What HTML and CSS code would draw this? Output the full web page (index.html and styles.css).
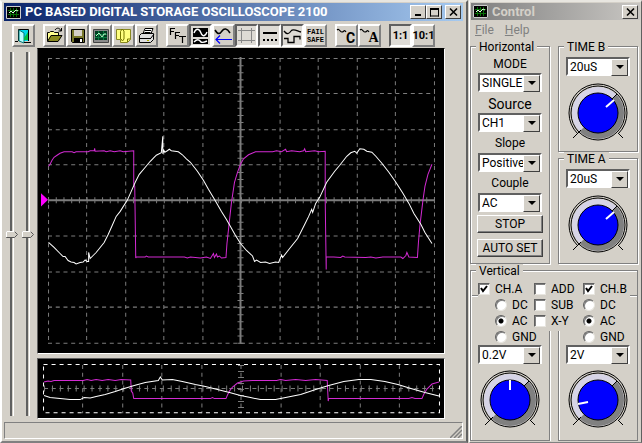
FILE: index.html
```html
<!DOCTYPE html>
<html lang="en">
<head>
<meta charset="utf-8">
<title>PC Based Digital Storage Oscilloscope 2100</title>
<link rel="stylesheet" href="styles.css">
</head>
<body>
<svg class="defs" aria-hidden="true">
  <symbol id="app" viewBox="0 0 15 13">
    <path fill="#000" d="M0 0h15v13H0z"/><path fill="none" stroke="#ccc" d="M.5.500h14v12H.5z"/>
    <path stroke="#087008" d="M2 4.500h11M2 8.500h11M4.500 2v9M7.500 2v9M10.500 2v9"/>
    <path fill="none" stroke="#dfd" d="M3 7l2-2 2 2 3-3 2 1"/>
  </symbol>
  <symbol id="knob" viewBox="-32 -30 64 60">
    <circle r="26" fill="#d6d4e6"/>
    <path fill="#808080" d="M18.400-18.400A26 26 0 0 1-18.400 18.400z"/>
    <circle r="27" fill="none" stroke="#000"/>
    <path fill="none" stroke="#000" d="M-20.500 20.500A29 29 0 1 1 20.500 20.500M-25 25l8-8M25 25l-5-5M14 -14l5-5"/>
    <circle r="20" fill="#00f" stroke="#000"/>
  </symbol>
</svg>
<main class="desktop">
<section class="window scope-window">
  <header class="titlebar">
    <svg class="app-icon"><use href="#app"/></svg>
    <h1>PC BASED DIGITAL STORAGE OSCILLOSCOPE 2100</h1>
    <button class="caption" aria-label="Minimize"><svg viewBox="0 0 11 10"><path d="M2 8h6" stroke="#000" stroke-width="2"/></svg></button>
    <button class="caption" aria-label="Maximize"><svg viewBox="0 0 11 10"><path d="M1 1.500h9M1.500 1v8.500M9.500 1v8.500M1 9h9" stroke="#000" /><path d="M1 1h9v2H1z"/></svg></button>
    <button class="caption close" aria-label="Close"><svg viewBox="0 0 11 10"><path d="M2 1.500l7 7M9 1.500l-7 7" stroke="#000" stroke-width="1.600"/></svg></button>
  </header>
  <nav class="toolbar" aria-label="Tools">
    <div class="group">
      <button aria-label="Exit"><svg viewBox="0 0 19 19"><path d="M4.500 15V3.500h10V15" fill="#00d8e8" stroke="#000"/><path d="M5 4l5 3v10l-5-2z" fill="#b8ffff" stroke="#007878"/><path d="M10 12l4-6v8h-4z" fill="#00c040"/><path d="M1 15.500h3M10 16.500h7" stroke="#000"/></svg></button>
    </div>
    <div class="group">
      <button aria-label="Open"><svg viewBox="0 0 19 19"><path d="M2.500 15V6.500h2l1-1h3l1 1h4V9" fill="#ffff90" stroke="#000"/><path d="M2.500 15.500L6 9.500h11l-4 6z" fill="#8a8a20" stroke="#000"/><path d="M10 4c2-3 5-2 6 1M13.500 5h3V2" fill="none" stroke="#000"/></svg></button>
      <button aria-label="Save"><svg viewBox="0 0 19 19"><path d="M3.500 3.500h13v13h-12l-1-1z" fill="#77772a" stroke="#000"/><path d="M6 4h8v6H6z" fill="#d4d0c8"/><path d="M6 12h9v4H6z"/><path d="M12 13h2v3h-2z" fill="#fff"/></svg></button>
      <button aria-label="Screen"><svg viewBox="0 0 19 19"><path d="M2.500 3.500h15v13h-15z" fill="#8a8a8a" stroke="#444"/><path d="M4 5h12v9H4z" fill="#003c20"/><path d="M4 8.500h12M4 11.500h12M7.500 5v9M12.500 5v9" stroke="#087840"/><path d="M5 10l3-3 3 4 2-3h2" stroke="#b8ffc8" fill="none"/></svg></button>
      <button aria-label="Notes"><svg viewBox="0 0 19 19"><path d="M2.500 3.500h14v10l-3 3h-7v-3h-4z" fill="#ffff80" stroke="#888820"/><path d="M6.500 13V5.500L8 3l2 2v8l-1.500 2L7 13M13.500 16v-3h3" stroke="#777700" fill="none"/></svg></button>
      <button aria-label="Print"><svg viewBox="0 0 19 19"><path d="M5.500 9L8 2.500h8L13.500 9z" fill="#fff" stroke="#000"/><path d="M2.500 9.500l2-2h12v6l-3 3h-11z" fill="#ddd" stroke="#000"/><path d="M3 12.500h11M14 12l3-4M8 4.500h6M7.500 6.500h6" stroke="#000"/><path d="M10 14.500h2" stroke="#aa0"/></svg></button>
    </div>
    <div class="group">
      <button aria-label="FFT"><svg viewBox="0 0 19 19"><path d="M2.500 9V2.500H7M2.500 5.500H6M7.500 13V6.500H12M7.500 9.500H11M11 10.500h7M14.500 10v7" fill="none" stroke="#000" stroke-width="1.200"/></svg></button>
      <button class="on" aria-label="Dual view"><svg viewBox="0 0 19 19"><path d="M2 2h15v9H2zM2 13h15v5H2z"/><path d="M3 7c2-5 5-5 7 0s5 2 6-1M3 16c3-3 5-3 7 0 2 1 4 0 6-1" fill="none" stroke="#fff" stroke-width="1.400"/></svg></button>
      <button aria-label="Recall wave"><svg viewBox="0 0 19 19"><path d="M1 4c3 5 5 4 7 1s5-3 8 2" fill="none" stroke="#000" stroke-width="1.500"/><path d="M2 13.500h16M6 9.500l-4 4 4 4" fill="none" stroke="#00f" stroke-width="1.200"/></svg></button>
      <button class="on" aria-label="Grid"><svg viewBox="0 0 19 19"><path d="M1 4.500h17M1 14.500h17M4.500 2v15M14.500 2v15" stroke="#888"/></svg></button>
      <button class="on" aria-label="Line style"><svg viewBox="0 0 19 19"><path d="M3 7h14" stroke="#000" stroke-width="2"/><path d="M3 14h14" stroke="#000" stroke-width="2" stroke-dasharray="2 2"/></svg></button>
      <button class="on" aria-label="Channels"><svg viewBox="0 0 19 19"><path d="M1 5c3 4 5 3 7 0s6 0 10 1M1 12.500h4v4h6v-6h6v3" fill="none" stroke="#000" stroke-width="1.300"/></svg></button>
      <button class="failsafe">FAIL<br>SAFE</button>
    </div>
    <div class="group">
      <button class="wave"><svg viewBox="0 0 11 6"><path d="M1 2c2-2 3 2 5 2s2-3 4 0" fill="none" stroke="#000" stroke-width="1.200"/></svg><b>C</b></button>
      <button class="wave serif"><svg viewBox="0 0 11 6"><path d="M1 2c2-2 3 2 5 2s2-3 4 0" fill="none" stroke="#000" stroke-width="1.200"/></svg><b>A</b></button>
    </div>
    <div class="group">
      <button class="on ratio">1:1</button>
      <button class="ratio">10:1</button>
    </div>
  </nav>
  <div class="work">
    <div class="sliders">
      <input type="range" aria-label="Channel A position" value="50">
      <input type="range" aria-label="Channel B position" value="50">
    </div>
    <div class="screens">
      <svg class="screen" viewBox="38 49 405 303" role="img" aria-label="Waveform display">
        <path class="grid" d="M48.500 58v285M86.500 58v285M125.500 58v285M163.500 58v285M202.500 58v285M279.500 58v285M317.500 58v285M356.500 58v285M394.500 58v285M433.500 58v285"/>
        <path class="grid" d="M48 58.500h386M48 93.500h386M48 129.500h386M48 164.500h386M48 235.500h386M48 271.500h386M48 306.500h386M48 342.500h386"/>
        <path class="axis" d="M48 200h386M240 57v286"/>
        <path class="ticks" stroke-dasharray="1 6.700" d="M48 200h386"/>
        <path class="ticks" stroke-dasharray="1 6.100" d="M240 58v285"/>
        <path fill="#f0f" d="M41 193l7 6.500-7 6.500z"/>
        <polyline class="b" points="48.500,166 50,164 52,160 54,157 57,155 60,153 64,151.500 72,151.500 74,152.500 76,151.500 88,151.500 90,150.500 94,150.500 94.500,148 95,151 104,150.500 106,151.500 110,150.500 114,151.500 120,150.500 123,151.500 133.500,150.500 133.500,184 134.500,186 135.500,257.500 136,256.500 145,256.500 146,255.500 148,256.500 184,256.500 187,257.500 190,256.500 200,257.500 206,256.500 210,258 213,253 214,257 216,253.500 217,256.500 219,255.500 221,257.500 225.500,257 226.500,243 229,220 231,202 234,182 237,172 240,164 243,158.500 248,154.500 255,151.500 272,151.500 276,150.500 281,151.500 285,149 286,151.500 291,150.500 299,151.500 303,150.500 304,148.500 305,151.500 314,150.500 318,151.500 324.500,151 324.500,200 325.500,269 325.500,256.500 333,256.500 340,257 342,255.500 344,256.500 365,257 370,256.500 375,257.500 382,256.500 400,256.500 402,258 405,255 406,252 408,256.500 416.500,257 417.500,242 419,225 422,200 424,186 427,174 431,164"/>
        <polyline class="a" points="48.500,242 54,247 60,253 63,256 65,256 68,260 71,261.500 74,262 76,263.500 80,262 83,261.500 85,259.500 87,261 88.500,261 88.500,252 90,258 93,255 96,252 104,242 108,234 112,225 116,216 120,211 127,200 131,191 135,182 139,174 145,167 150,161 156,155 161,152.500 162.500,136 162.500,153.500 163.500,150 164.500,152 167,150.500 169,149 171,150.500 178,151.500 182,154.500 186,158.500 190,162 197,171 203,180 208,189 214,199 221,211 226,219 230,226 235,235 240,243 246,250 252,255.500 254,261 256,259.500 260,262 265,261.500 269,263 275,261.500 278,262 281,254.500 282,257 289,248 297,238 304,224 308,216 311,209 312,212 315,203 319,197 326,182 334,171 339,165 346,156 350,152.500 354,151 356,153 359,148.500 363,149 366,151 371,152 375,156 381,163 388,172 395,182 402,193 408,203 413,213 420,224 424,232 431,243"/>
      </svg>
      <svg class="screen mini" viewBox="38 359 405 59" role="img" aria-label="Waveform overview">
        <path class="grid" d="M82.500 365v48M122.500 365v48M161.500 365v48M201.500 365v48M280.500 365v48M319.500 365v48M359.500 365v48M398.500 365v48M44 388.500h395M240.500 365v48"/>
        <path class="ticks" stroke-dasharray="1 6.900" d="M44 388.500h395"/>
        <path class="ticks" stroke-dasharray="1 5" d="M240.500 365v48"/>
        <path class="frame" d="M43.500 364.500h395v48h-395z"/>
        <polyline class="b" points="44,382 48,381 51,381.500 54,380.500 83,380.500 87,379.500 91,380.500 96,379.500 102,380.500 108,379.500 115,380.500 121,379.500 130.500,380 131,391 132.500,393 133.500,398.500 210,398.500 212,397.500 214,398.500 225.500,398.500 227,395 229,391 232,387 237,383 243,381 252,380.500 276,380.500 280,379.500 285,380.500 295,379.500 305,380.500 315,379.500 326.500,380.500 327.500,401 328,398.500 408,398.500 411,397.500 414,398.500 421,398.500 423,394 426,389 431,384 438,382"/>
        <polyline class="a" points="44,395.500 50,397.500 60,398.500 70,399.500 80,399.500 84,397.500 90,398 96,396.500 105,394.500 115,391.500 124,388.500 134,385.500 145,382.500 158,380.500 160,377 162,380 172,379.500 182,381.500 195,384.500 205,386.500 217,389.500 229,392.500 240,395.500 250,397.500 260,399.500 275,399.500 285,397.500 300,394.500 315,389.500 328,385.500 343,381.500 358,379.500 370,379.500 384,381.500 397,384.500 410,388.500 424,392.500 438,396"/>
      </svg>
    </div>
  </div>
  <footer class="status"><svg viewBox="0 0 12 12"><path d="M0 12L12 0M4 12l8-8M8 12l4-4" stroke="#808080" stroke-width="1.500"/></svg></footer>
</section>

<section class="window control-window">
  <header class="titlebar inactive">
    <svg class="app-icon"><use href="#app"/></svg>
    <h2>Control</h2>
    <button class="caption" aria-label="Close control"><svg viewBox="0 0 11 10"><path d="M2 1.500l7 7M9 1.500l-7 7" stroke="#000" stroke-width="1.600"/></svg></button>
  </header>
  <nav class="menu"><a href="#"><u>F</u>ile</a><a href="#"><u>H</u>elp</a></nav>
  <div class="panels">
    <section class="panel horizontal">
      <h3>Horizontal</h3>
      <label for="mode">MODE</label>
      <span class="select"><select id="mode"><option>SINGLE</option></select></span>
      <label for="source" class="large">Source</label>
      <span class="select"><select id="source"><option>CH1</option></select></span>
      <label for="slope">Slope</label>
      <span class="select"><select id="slope"><option>Positive</option></select></span>
      <label for="couple">Couple</label>
      <span class="select"><select id="couple"><option>AC</option></select></span>
      <button class="push">STOP</button>
      <button class="push">AUTO SET</button>
    </section>
    <div class="times">
      <section class="panel time">
        <h3><label for="tb">TIME B</label></h3>
        <span class="select"><select id="tb"><option>20uS</option></select></span>
        <svg class="knob" viewBox="-32 -30 64 60"><use href="#knob" x="-32" y="-30" width="64" height="60"/><path class="hand" d="M8-6l8-7"/></svg>
      </section>
      <section class="panel time">
        <h3><label for="ta">TIME A</label></h3>
        <span class="select"><select id="ta"><option>20uS</option></select></span>
        <svg class="knob" viewBox="-32 -30 64 60"><use href="#knob" x="-32" y="-30" width="64" height="60"/><path class="hand" d="M8-6l8-7"/></svg>
      </section>
    </div>
  </div>
  <section class="panel vertical">
    <h3>Vertical</h3>
    <div class="checks">
      <div class="col">
        <label><input type="checkbox" checked>CH.A</label>
        <label class="in"><input type="radio" name="a">DC</label>
        <label class="in"><input type="radio" name="a" checked>AC</label>
        <label class="in"><input type="radio" name="a">GND</label>
      </div>
      <div class="col">
        <label><input type="checkbox">ADD</label>
        <label><input type="checkbox">SUB</label>
        <label><input type="checkbox">X-Y</label>
      </div>
      <div class="col">
        <label><input type="checkbox" checked>CH.B</label>
        <label><input type="radio" name="b">DC</label>
        <label><input type="radio" name="b" checked>AC</label>
        <label><input type="radio" name="b">GND</label>
      </div>
    </div>
    <div class="channels">
      <div class="channel">
        <span class="select"><select aria-label="Channel A volts"><option>0.2V</option></select></span>
        <svg class="knob" viewBox="-32 -30 64 60"><use href="#knob" x="-32" y="-30" width="64" height="60"/><path class="hand" d="M0-20v10"/></svg>
      </div>
      <div class="channel">
        <span class="select"><select aria-label="Channel B volts"><option>2V</option></select></span>
        <svg class="knob" viewBox="-32 -30 64 60"><use href="#knob" x="-32" y="-30" width="64" height="60"/><path class="hand" d="M-20 4l10-2"/></svg>
      </div>
    </div>
  </section>
</section>
</main>
</body>
</html>
```
FILE: styles.css
```css
* { box-sizing: border-box; }
:root {
  --face: #d4d0c8;
  --shade: #808080;
  --dark: #404040;
}
body {
  margin: 0;
  background: var(--face);
  font: 12px/14px Roboto, "Liberation Sans", Arial, sans-serif;
  color: #000;
}
button, select, input { font: inherit; color: inherit; margin: 0; border-radius: 0; }
h1, h2, h3 { margin: 0; font-size: inherit; }
svg { display: block; }
.defs { position: absolute; width: 0; height: 0; }

.desktop { display: flex; gap: 1px; min-height: 100vh; }
.window {
  display: flex;
  flex-direction: column;
  background: var(--face);
  border: 2px solid;
  border-color: #e8e6e0 #606060 #808080 #fff;
}
.scope-window { flex: 1; min-width: 0; padding: 1px 3px 0 2px; }
.control-window { width: 173px; flex: none; padding: 1px 1px 0 0; border-width: 2px 1px 1px 1px; }

.titlebar {
  display: flex;
  align-items: center;
  height: 18px;
  padding: 0 2px;
  background: linear-gradient(90deg, #0a246a, #a6caf0);
  color: #fff;
}
.titlebar h1, .titlebar h2 {
  flex: 1;
  padding-left: 4px;
  font-size: 13px;
  white-space: nowrap;
}
.titlebar.inactive {
  height: 17px;
  margin-left: 1px;
  background: linear-gradient(90deg, #808080, #c8c6c2);
  color: #d4d0c8;
}
.app-icon { width: 15px; height: 13px; }
.caption {
  width: 16px;
  height: 14px;
  padding: 0;
  display: grid;
  place-items: center;
  background: var(--face);
  border: 1px solid;
  border-color: #fff var(--dark) var(--dark) #fff;
}
.caption svg { width: 11px; height: 10px; }
.close { margin-left: 3px; }

.toolbar { display: flex; gap: 8px; padding: 3px 0 1px 8px; }
.group { display: flex; }
.toolbar button {
  width: 23px;
  height: 23px;
  padding: 0;
  display: grid;
  place-items: center;
  place-content: center;
  background: var(--face);
  border: 2px solid;
  border-color: #fff var(--shade) var(--shade) #fff;
}
.toolbar button svg { width: 19px; height: 19px; }
.toolbar button.on {
  border-color: #606060 #fff #fff #606060;
  background: #dedbd5;
}
.toolbar .failsafe { font: bold 7px/8px "Liberation Mono", monospace; }
.toolbar .ratio { font-size: 11px; font-weight: bold; white-space: nowrap; }
.toolbar .wave { grid-template: 19px / 8px 11px; }
.toolbar .wave svg { width: 11px; height: 6px; align-self: start; margin-top: 2px; }
.wave b { align-self: end; font-size: 14px; }
.wave.serif b { font-family: "Liberation Serif", serif; }

.work { display: flex; padding-right: 18px; }
.sliders { display: flex; gap: 4px; width: 33px; padding: 4px 0 3px 2px; }
.sliders input {
  appearance: none;
  writing-mode: vertical-lr;
  width: 12px;
  height: 364px;
  background: linear-gradient(90deg, transparent 4px, #606060 4px 6px, var(--face) 6px 7px, #fff 7px 8px, transparent 8px);
}
.sliders input::-webkit-slider-thumb {
  appearance: none;
  width: 12px;
  height: 7px;
  background: url("data:image/svg+xml,%3Csvg xmlns='http://www.w3.org/2000/svg' viewBox='0 0 12 7'%3E%3Cpath d='M.5.500h8l3 3-3 3h-8z' fill='%23d4d0c8' stroke='%23555'/%3E%3Cpath d='M.5 6V.500h8' fill='none' stroke='%23fff'/%3E%3C/svg%3E");
}
.screens { flex: 1; min-width: 0; display: grid; gap: 4px; align-content: start; }
.screen {
  width: 100%;
  background: #000;
  border: 1px solid;
  border-color: #000 #fff #fff #606060;
  fill: none;
}
.mini { border-top-color: #606060; }
.grid { stroke: #7c7c7c; stroke-dasharray: 4 3.700; }
.axis { stroke: #7c7c7c; stroke-width: 2; }
.ticks { stroke: #7c7c7c; stroke-width: 6; }
.frame { stroke: #fff; stroke-dasharray: 4 4; }
.a { stroke: #fff; }
.b { stroke: #d22ad2; }
.status {
  display: flex;
  justify-content: flex-end;
  align-items: flex-end;
  height: 17px;
  margin-top: 3px;
  border: 1px solid;
  border-color: var(--shade) #fff #fff var(--shade);
}
.status svg { width: 12px; height: 12px; }

.menu { display: flex; gap: 11px; padding: 3px 5px 0; height: 18px; }
.menu a { color: var(--shade); text-decoration: none; }

.panels { display: flex; justify-content: space-between; padding: 8px 2px 0 0; }
.panel { border: 1px solid var(--shade); box-shadow: 1px 1px 0 #fff, inset 1px 1px 0 #fff; }
.panel h3 {
  width: fit-content;
  margin: -7px 0 0 5px;
  padding: 0 3px;
  background: var(--face);
  font-weight: normal;
}
.horizontal {
  width: 80px;
  display: flex;
  flex-direction: column;
  align-items: center;
  height: 218px;
}
.horizontal h3 { align-self: flex-start; }
.horizontal label { height: 21px; line-height: 22px; }
.horizontal h3 + label { height: 19px; line-height: 20px; }
.horizontal .large { font-size: 14px; line-height: 24px; }
.times { display: grid; gap: 6px; width: 80px; }
.time { height: 106px; }
.time .select { margin: 3px 0 0 7px; }
.time .knob { margin: 7px 0 0 7px; }
.knob { width: 64px; height: 60px; }
.hand { fill: none; stroke: #fff; stroke-width: 2; }

.select { position: relative; display: block; width: 64px; height: 19px; }
.select select {
  appearance: none;
  display: block;
  width: 100%;
  height: 100%;
  padding: 0 15px 0 2px;
  background: #fff;
  border: 2px solid;
  border-color: #606060 #fff #fff #606060;
}
.select::before {
  content: "";
  position: absolute;
  right: 2px;
  top: 2px;
  width: 15px;
  height: 15px;
  background: var(--face);
  border: 1px solid;
  border-color: #fff var(--dark) var(--dark) #fff;
  pointer-events: none;
}
.select::after {
  content: "";
  position: absolute;
  right: 6px;
  top: 8px;
  border: 4px solid transparent;
  border-top-color: #000;
  border-bottom: 0;
  pointer-events: none;
}
.push {
  width: 66px;
  height: 18px;
  margin-top: 3px;
  padding: 0;
  line-height: 14px;
  background: var(--face);
  border: 1px solid;
  border-color: #fff var(--dark) var(--dark) #fff;
  box-shadow: inset -1px -1px 0 var(--shade);
}
.push + .push { margin-top: 6px; }

.vertical {
  display: flex;
  flex-direction: column;
  flex: 1;
  margin: 6px 2px 1px 0;
  border-bottom: 0;
  box-shadow: inset 1px 1px 0 #fff;
  background:
    linear-gradient(var(--shade) 1px, #fff 1px) 0 24px / 7px 2px no-repeat,
    linear-gradient(var(--shade) 1px, #fff 1px) 100% 24px / 7px 2px no-repeat;
}
.checks { display: flex; position: relative; z-index: 1; padding: 3px 0 0 7px; }
.checks .col:nth-child(1) { width: 56px; }
.checks .col:nth-child(2) { width: 49px; }
.checks label { display: flex; align-items: center; gap: 5px; height: 16px; white-space: nowrap; }
.checks .in { padding-left: 17px; }
.checks input {
  appearance: none;
  flex: none;
  width: 12px;
  height: 12px;
  background: #fff;
  border: 1px solid;
  border-color: #606060 #e8e6e0 #e8e6e0 #606060;
  box-shadow: inset 1px 1px 0 #808080;
}
.checks input[type="radio"] { border-radius: 50%; }
.checks input[type="radio"]:checked { background: radial-gradient(circle, #000 2px, #fff 3px); }
.checks input[type="checkbox"]:checked {
  background: #fff url("data:image/svg+xml,%3Csvg xmlns='http://www.w3.org/2000/svg' viewBox='0 0 10 10'%3E%3Cpath d='M2 4l2 3 4-5' fill='none' stroke='%23000' stroke-width='2'/%3E%3C/svg%3E");
}
.channels { display: flex; justify-content: space-between; flex: 1; margin-top: -14px; }
.channel {
  width: 79px;
  padding: 14px 0 0 7px;
  border-bottom: 1px solid var(--shade);
}
.channel:first-child { border-right: 1px solid var(--shade); box-shadow: 1px 0 0 #fff; }
.channel:last-child { border-left: 1px solid var(--shade); box-shadow: inset 1px 0 0 #fff; }
.channel .knob { margin-top: 6px; }
```
